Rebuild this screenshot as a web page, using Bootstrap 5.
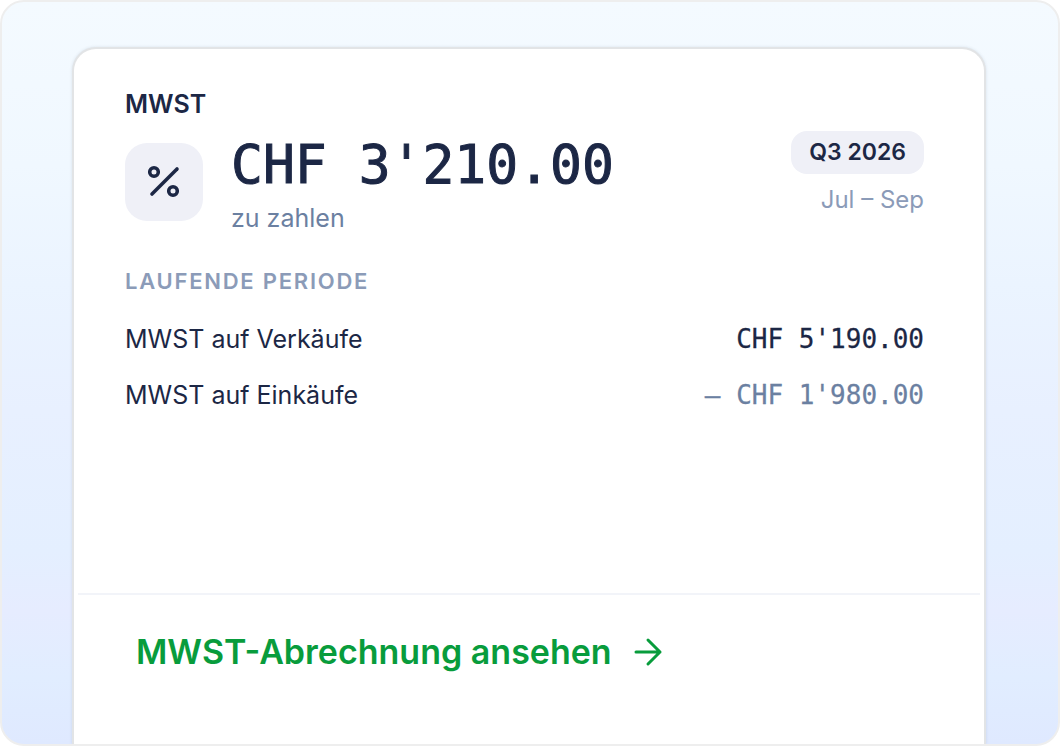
<!DOCTYPE html>
<html lang="de">
<head>
<meta charset="utf-8">
<meta name="viewport" content="width=device-width, initial-scale=1">
<title>MWST</title>
<link href="https://cdn.jsdelivr.net/npm/bootstrap@5.3.0/dist/css/bootstrap.min.css" rel="stylesheet">
<style>
  :root { --ink: #1c2745; --slate: #6b80a1; --mist: #8b9bb8; --soft: #eff0f7; --go: #089c3c; }
  body { font-family: Inter, "Liberation Sans", sans-serif; color: var(--ink); font-size: 25px; line-height: 32px; }
  .stage {
    border: 2px solid #eeeeee; border-radius: 24px; padding: 45px 72px 0 70px;
    background: linear-gradient(180deg, #f4faff 0%, #f0f8ff 22%, #ebf4ff 38%, #e8f0ff 55%, #e4efff 74%, #e6ecff 82%, #e1edff 91%, #dfe9ff 100%);
  }
  .vat-card {
    border: 2px solid #e2e4e6; border-bottom: 0; border-radius: 24px 24px 0 0;
    box-shadow: 0 0 3px rgba(60, 80, 110, .15);
  }
  .vat-body { padding: 39px 60px 32px 51px; }
  .vat-title { font-size: 25px; line-height: 32px; margin: 0 0 11px; }
  .tile { width: 78px; height: 78px; border-radius: 22px; background: var(--soft); margin: 12px 28px 0 0; }
  .figures { font-family: "DejaVu Sans Mono", "Liberation Mono", monospace; -webkit-text-stroke: 0.01em currentColor; }
  .total { font-size: 53px; line-height: 68px; margin-bottom: 3px; -webkit-text-stroke-width: 1px; }
  .slate { color: var(--slate); }
  .mist { color: var(--mist); }
  .quarter { background: var(--soft); border-radius: 16px; font-size: 23px; line-height: 31px; padding: 6px 18px; }
  .months { font-size: 24px; margin-top: 10px; }
  .period { font-size: 22px; line-height: 28px; letter-spacing: .08em; margin: 33px 0 16px; }
  .ledger th, .ledger td { padding: 12px 0; }
  .amount { font-size: 26px; }
  .vat-foot { border-top: 2px solid #f2f4f9; margin: 0 4px; padding: 36px 58px 71px; }
  .report { color: var(--go); font-size: 34px; line-height: 42px; gap: 19px; }
</style>
</head>
<body>
<main class="stage min-vh-100 d-flex flex-column overflow-hidden">
  <section class="vat-card bg-white flex-grow-1 d-flex flex-column" aria-labelledby="vat-title">
    <div class="vat-body flex-grow-1">
      <h1 id="vat-title" class="vat-title fw-semibold">MWST</h1>
      <div class="d-flex justify-content-between align-items-start">
        <div class="d-flex align-items-start">
          <div class="tile d-flex align-items-center justify-content-center flex-shrink-0">
            <svg width="36" height="36" viewBox="0 0 36 36" fill="none" stroke="currentColor" stroke-width="3.6" stroke-linecap="round" aria-hidden="true">
              <path d="M31 5 6 30"/><circle cx="8" cy="8" r="4.3"/><circle cx="27" cy="27" r="4.3"/>
            </svg>
          </div>
          <div>
            <div class="figures total">CHF 3'210.00</div>
            <div class="slate">zu zahlen</div>
          </div>
        </div>
        <div class="text-end">
          <div class="quarter fw-semibold">Q3 2026</div>
          <div class="months mist">Jul – Sep</div>
        </div>
      </div>
      <h2 class="period mist fw-semibold">LAUFENDE PERIODE</h2>
      <table class="ledger w-100">
        <tbody>
          <tr><th scope="row" class="fw-normal">MWST auf Verkäufe</th><td class="figures amount text-end">CHF 5'190.00</td></tr>
          <tr><th scope="row" class="fw-normal">MWST auf Einkäufe</th><td class="figures amount text-end slate">– CHF 1'980.00</td></tr>
        </tbody>
      </table>
    </div>
    <div class="vat-foot">
      <a href="#" class="report fw-semibold text-decoration-none d-inline-flex align-items-center">MWST-Abrechnung ansehen
        <svg width="34" height="34" viewBox="0 0 34 34" fill="none" stroke="currentColor" stroke-width="3" stroke-linecap="round" stroke-linejoin="round" aria-hidden="true"><path d="M5 17h24M17 5l12 12-12 12"/></svg>
      </a>
    </div>
  </section>
</main>
<script src="https://cdn.jsdelivr.net/npm/bootstrap@5.3.0/dist/js/bootstrap.bundle.min.js"></script>
</body>
</html>
